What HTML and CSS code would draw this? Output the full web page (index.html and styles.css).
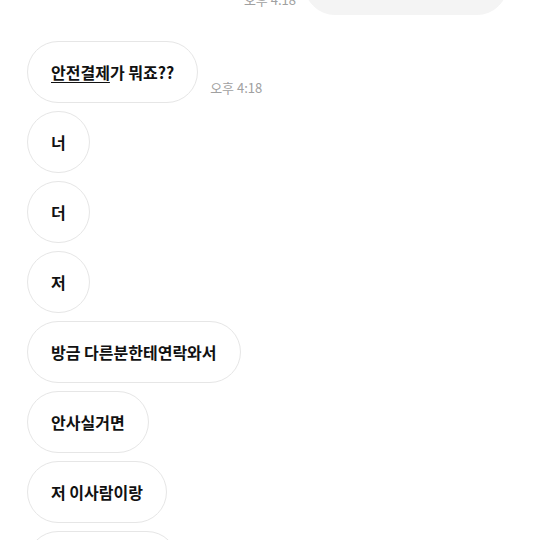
FILE: index.html
```html
<!DOCTYPE html>
<html>
  <head>
    <meta name="viewport" content="width=device-width, initial-scale=1" />
    <link rel="stylesheet" href="styles.css">
  </head>
  <body>
    <div class="chat">
      <div class="row mine first">
        <span class="time">오후 4:18</span>
        <div class="bubble gray">택배거래 가능할까요?</div>
      </div>

      <div class="row theirs gap-top">
        <div class="bubble"><span class="link">안전결제</span>가 뭐죠??</div>
        <span class="time">오후 4:18</span>
      </div>
      <div class="row theirs"><div class="bubble">너</div></div>
      <div class="row theirs"><div class="bubble">더</div></div>
      <div class="row theirs"><div class="bubble">저</div></div>
      <div class="row theirs"><div class="bubble">방금 다른분한테연락와서</div></div>
      <div class="row theirs"><div class="bubble">안사실거면</div></div>
      <div class="row theirs"><div class="bubble">저 이사람이랑</div></div>
      <div class="row theirs"><div class="bubble">거래할게요ㅠㅠ</div></div>
    </div>
  </body>
</html>
```

FILE: styles.css
```css
* {
  box-sizing: border-box;
}
body {
  margin: 0;
  background: #fff;
  font-family: "Noto Sans CJK KR", "Noto Sans", sans-serif;
  overflow: hidden;
}

.chat {
  display: flex;
  flex-direction: column;
  gap: 8px;
  padding: 0 32px 0 27px;
}

.row {
  display: flex;
  align-items: flex-end;
}

.row.mine {
  justify-content: flex-end;
  gap: 8px;
}

.row.theirs {
  gap: 12px;
}

/* the list is scrolled, so the first bubble is cut off at the top */
.row.first {
  margin-top: -47px;
}

.gap-top {
  margin-top: 18px;
}

.bubble {
  height: 62px;
  display: flex;
  align-items: center;
  padding: 0 23px;
  border: 1px solid #e6e6e6;
  border-radius: 31px;
  font-size: 16px;
  font-weight: 600;
  color: #111;
  white-space: nowrap;
}

.bubble.gray {
  background: #f4f4f4;
  border-color: #f4f4f4;
  width: 204px;
  color: transparent;
}

.link {
  text-decoration: underline;
  text-underline-offset: 3px;
}

.time {
  font-size: 13px;
  color: #a0a0a0;
  margin-bottom: 6px;
}
```
